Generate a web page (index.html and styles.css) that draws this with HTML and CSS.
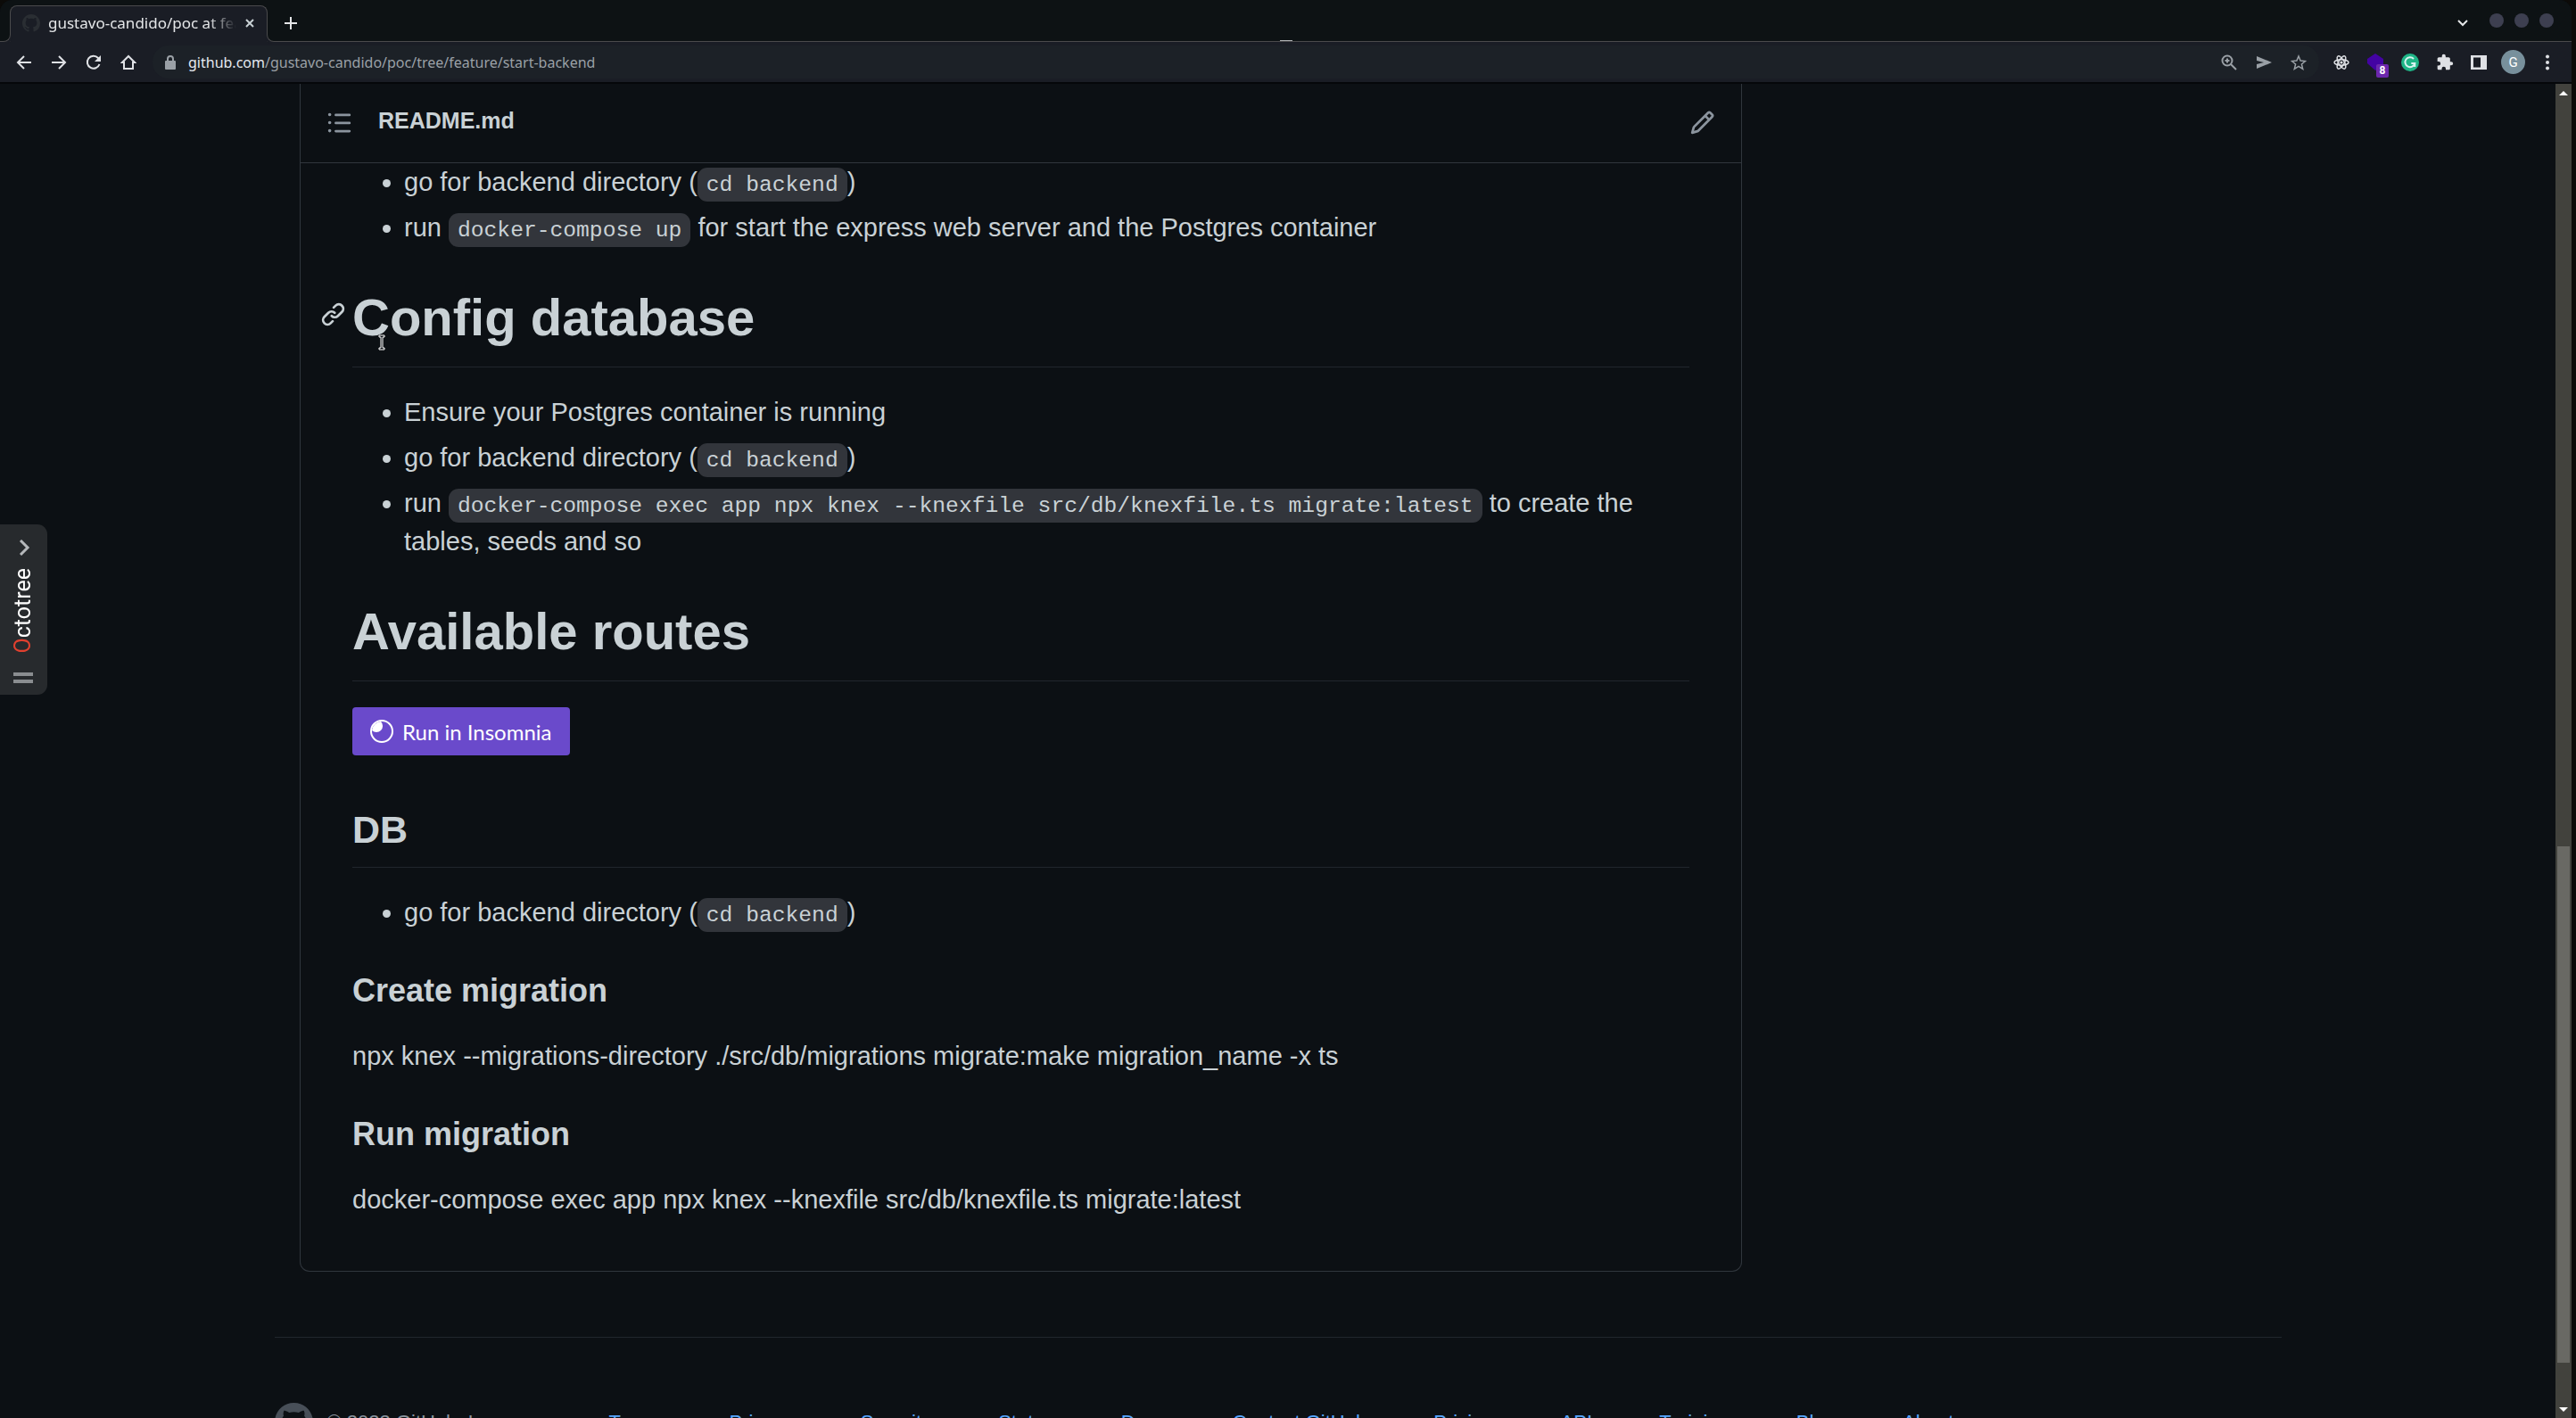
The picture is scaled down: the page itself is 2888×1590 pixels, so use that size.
FILE: index.html
```html
<!DOCTYPE html>
<html lang="en">
<head>
<meta charset="utf-8">
<title>gustavo-candido/poc at feature/start-backend</title>
<link rel="stylesheet" href="styles.css">
</head>
<body>
<div class="window">
  <header class="tabstrip">
    <div class="tab">
      <svg class="favicon" viewBox="0 0 16 16"><path fill="currentColor" d="M8 0C3.58 0 0 3.58 0 8c0 3.54 2.29 6.53 5.47 7.59.4.07.55-.17.55-.38 0-.19-.01-.82-.01-1.49-2.01.37-2.53-.49-2.69-.94-.09-.23-.48-.94-.82-1.13-.28-.15-.68-.52-.01-.53.63-.01 1.08.58 1.23.82.72 1.21 1.87.87 2.33.66.07-.52.28-.87.51-1.07-1.78-.2-3.64-.89-3.64-3.95 0-.87.31-1.59.82-2.15-.08-.2-.36-1.02.08-2.12 0 0 .67-.21 2.2.82.64-.18 1.32-.27 2-.27s1.36.09 2 .27c1.53-1.04 2.2-.82 2.2-.82.44 1.1.16 1.92.08 2.12.51.56.82 1.27.82 2.15 0 3.07-1.87 3.75-3.65 3.95.29.25.54.73.54 1.48 0 1.07-.01 1.93-.01 2.2 0 .21.15.46.55.38A8.01 8.01 0 0 0 16 8c0-4.42-3.58-8-8-8Z"/></svg>
      <span class="tab-title">gustavo-candido/poc at feature</span>
      <button class="plain" aria-label="Close tab"><svg class="i12" viewBox="0 0 12 12"><path d="M2 2l8 8M10 2l-8 8" class="line"/></svg></button>
    </div>
    <button class="plain new-tab" aria-label="New tab"><svg class="i16" viewBox="0 0 16 16"><path d="M8 1v14M1 8h14" class="line"/></svg></button>
    <div class="window-buttons">
      <button class="plain search-tabs" aria-label="Search tabs"><svg class="i12" viewBox="0 0 12 12"><path d="M1 4l5 5 5-5" class="line"/></svg></button>
      <button class="dot" aria-label="Minimize"></button>
      <button class="dot" aria-label="Maximize"></button>
      <button class="dot" aria-label="Close"></button>
    </div>
  </header>
  <nav class="toolbar">
    <div class="nav-buttons">
      <button class="plain" aria-label="Back"><svg class="i18" viewBox="0 0 18 18"><path d="M17 9H2M9 2L2 9l7 7" class="line"/></svg></button>
      <button class="plain" aria-label="Forward"><svg class="i18" viewBox="0 0 18 18"><path d="M1 9h15M9 2l7 7-7 7" class="line"/></svg></button>
      <button class="plain" aria-label="Reload"><svg class="i18" viewBox="0 0 18 18"><path d="M15.500 11A7 7 0 1 1 14 4l2 2" class="line"/><path d="M17 1v7h-7z" fill="currentColor"/></svg></button>
      <button class="plain" aria-label="Home"><svg class="i18" viewBox="0 0 18 18"><path d="M9 2L2 9h2v7h10V9h2z" class="line"/></svg></button>
    </div>
    <div class="omnibox">
      <svg class="lock" viewBox="0 0 12 16"><path d="M3 7V4a3 3 0 0 1 6 0v3" fill="none" stroke="currentColor" stroke-width="2"/><rect y="6" width="12" height="10" rx="1" fill="currentColor"/></svg>
      <div class="url"><b>github.com</b>/gustavo-candido/poc/tree/feature/start-backend</div>
      <div class="omni-actions">
        <button class="plain" aria-label="Zoom"><svg class="i18" viewBox="0 0 18 18"><circle cx="7" cy="7" r="5.500" class="line"/><path d="M11 11l6 6M4.500 7h5M7 4.500v5" class="line"/></svg></button>
        <button class="plain" aria-label="Share"><svg class="i18" viewBox="0 0 18 18"><path d="M1 2l17 7-17 7V11l8-2-8-2z" fill="currentColor"/></svg></button>
        <button class="plain" aria-label="Bookmark"><svg class="i18" viewBox="0 0 18 18"><path d="M9 2l2.100 5 5.400.500-4.100 3.500 1.300 5.300L9 13.400l-4.700 2.900 1.300-5.300L1.500 7.500 6.900 7z" class="line thin"/></svg></button>
      </div>
    </div>
    <div class="extensions">
      <button class="plain" aria-label="React"><svg class="i18" viewBox="0 0 18 18"><g class="line thin"><ellipse cx="9" cy="9" rx="8" ry="3.200"/><ellipse cx="9" cy="9" rx="8" ry="3.200" transform="rotate(60 9 9)"/><ellipse cx="9" cy="9" rx="8" ry="3.200" transform="rotate(120 9 9)"/></g><circle cx="9" cy="9" r="1.600" fill="currentColor"/></svg></button>
      <button class="plain badged" aria-label="Extension, 8 items"><svg class="i20" viewBox="0 0 20 20"><path d="M10 0l9 6v8l-9 5-9-8V6z" fill="#4303a3"/></svg><span class="badge">8</span></button>
      <button class="plain" aria-label="Grammarly"><svg class="i20" viewBox="0 0 20 20"><circle cx="10" cy="10" r="10" fill="#1fb587"/><path d="M14 6a5.500 5.500 0 1 0 1.300 5h-4M15.300 11v4" fill="none" stroke="#d8f3f0" stroke-width="2"/></svg></button>
      <button class="plain" aria-label="Extensions"><svg class="i20" viewBox="0 0 24 24"><path fill="currentColor" d="M20.500 11H19V7c0-1.100-.900-2-2-2h-4V3.500a2.500 2.500 0 0 0-5 0V5H4c-1.100 0-2 .900-2 2v3.800h1.500a2.700 2.700 0 0 1 0 5.400H2V20c0 1.100.900 2 2 2h3.800v-1.500a2.700 2.700 0 0 1 5.400 0V22H17c1.100 0 2-.900 2-2v-4h1.500a2.500 2.500 0 0 0 0-5z"/></svg></button>
      <button class="plain" aria-label="Side panel"><svg class="i18" viewBox="0 0 18 18"><path fill="currentColor" fill-rule="evenodd" d="M0 1h18v16H0zM3 3.500v11h8v-11z"/></svg></button>
      <button class="avatar" aria-label="Profile">G</button>
      <button class="plain" aria-label="Menu"><svg class="i18" viewBox="0 0 18 18"><g fill="currentColor"><circle cx="9" cy="2.500" r="2"/><circle cx="9" cy="9" r="2"/><circle cx="9" cy="15.500" r="2"/></g></svg></button>
    </div>
  </nav>
  <div class="viewport">
    <div class="page">
      <main class="layout">
        <section class="readme">
          <div class="readme-head">
            <button class="plain" aria-label="Table of contents"><svg class="i29" viewBox="0 0 16 16"><path fill="currentColor" d="M2 4a1 1 0 1 0 0-2 1 1 0 0 0 0 2Zm3.750-1.500a.75.75 0 0 0 0 1.500h8.500a.75.75 0 0 0 0-1.500h-8.500Zm0 5a.75.75 0 0 0 0 1.500h8.500a.75.75 0 0 0 0-1.500h-8.500Zm0 5a.75.75 0 0 0 0 1.500h8.500a.75.75 0 0 0 0-1.500h-8.500ZM3 8a1 1 0 1 1-2 0 1 1 0 0 1 2 0Zm-1 6a1 1 0 1 0 0-2 1 1 0 0 0 0 2Z"/></svg></button>
            <h2 class="file">README.md</h2>
            <button class="plain edit" aria-label="Edit file"><svg class="i29" viewBox="0 0 16 16"><path fill="currentColor" d="M11.013 1.427a1.750 1.750 0 0 1 2.474 0l1.086 1.086a1.750 1.750 0 0 1 0 2.474l-8.610 8.610c-.21.21-.47.364-.756.445l-3.251.930a.75.75 0 0 1-.927-.928l.929-3.250c.081-.286.235-.547.445-.758l8.610-8.610Zm.176 4.823L9.750 4.810l-6.286 6.287a.25.25 0 0 0-.064.108l-.558 1.953 1.953-.558a.25.25 0 0 0 .108-.064l6.286-6.286Zm1.238-3.763a.25.25 0 0 0-.354 0L10.811 3.750l1.439 1.440 1.263-1.263a.25.25 0 0 0 0-.354l-1.086-1.086Z"/></svg></button>
          </div>
          <article class="markdown">
            <ul>
              <li>go for backend directory (<code>cd backend</code>)</li>
              <li>run <code>docker-compose up</code> for start the express web server and the Postgres container</li>
            </ul>
            <h1><a class="anchor" href="#config-database" aria-label="Link to Config database"><svg class="i29" viewBox="0 0 16 16"><path fill="currentColor" d="m7.775 3.275 1.250-1.250a3.500 3.500 0 1 1 4.950 4.950l-2.500 2.500a3.500 3.500 0 0 1-4.950 0 .751.751 0 0 1 .018-1.042.751.751 0 0 1 1.042-.018 1.998 1.998 0 0 0 2.830 0l2.500-2.500a2.002 2.002 0 0 0-2.830-2.830l-1.250 1.250a.751.751 0 0 1-1.042-.018.751.751 0 0 1-.018-1.042Zm-4.690 9.640a1.998 1.998 0 0 0 2.830 0l1.250-1.250a.751.751 0 0 1 1.042.018.751.751 0 0 1 .018 1.042l-1.250 1.250a3.500 3.500 0 1 1-4.950-4.950l2.500-2.500a3.500 3.500 0 0 1 4.950 0 .751.751 0 0 1-.018 1.042.751.751 0 0 1-1.042.018 1.998 1.998 0 0 0-2.830 0l-2.500 2.500a1.998 1.998 0 0 0 0 2.830Z"/></svg></a>Config database</h1>
            <ul>
              <li>Ensure your Postgres container is running</li>
              <li>go for backend directory (<code>cd backend</code>)</li>
              <li>run <code>docker-compose exec app npx knex --knexfile src/db/knexfile.ts migrate:latest</code> to create the tables, seeds and so</li>
            </ul>
            <h1>Available routes</h1>
            <p class="run"><a class="insomnia" href="#run"><svg class="i26" viewBox="0 0 26 26"><circle cx="13" cy="13" r="12" fill="none" stroke="currentColor" stroke-width="2"/><path fill="currentColor" d="M12 2a6 6 0 1 1-10 10A11 11 0 0 1 12 2z"/></svg>Run in Insomnia</a></p>
            <h2>DB</h2>
            <ul>
              <li>go for backend directory (<code>cd backend</code>)</li>
            </ul>
            <h3>Create migration</h3>
            <p>npx knex --migrations-directory ./src/db/migrations migrate:make migration_name -x ts</p>
            <h3>Run migration</h3>
            <p>docker-compose exec app npx knex --knexfile src/db/knexfile.ts migrate:latest</p>
          </article>
        </section>
      </main>
      <footer class="footer">
        <svg class="mark" viewBox="0 0 16 16"><path fill="currentColor" d="M8 0C3.580 0 0 3.580 0 8c0 3.540 2.290 6.530 5.470 7.590.4.070.55-.17.55-.38 0-.19-.01-.82-.01-1.490-2.010.370-2.530-.490-2.690-.940-.09-.23-.48-.94-.82-1.130-.28-.15-.68-.52-.01-.53.63-.01 1.080.58 1.230.82.72 1.210 1.870.87 2.330.66.07-.52.28-.87.51-1.070-1.780-.2-3.640-.89-3.640-3.950 0-.87.31-1.590.82-2.150-.08-.2-.36-1.020.08-2.120 0 0 .67-.21 2.200.82.64-.18 1.320-.27 2-.27s1.360.09 2 .27c1.530-1.040 2.200-.82 2.200-.82.44 1.100.16 1.920.08 2.120.51.56.82 1.270.82 2.150 0 3.070-1.870 3.750-3.650 3.950.29.25.54.73.54 1.480 0 1.070-.01 1.930-.01 2.200 0 .21.15.46.55.38A8.010 8.010 0 0 0 16 8c0-4.420-3.580-8-8-8Z"/></svg>
        <span class="copyright">© 2023 GitHub, Inc.</span>
        <nav class="footer-links">
          <a href="#terms">Terms</a><a href="#privacy">Privacy</a><a href="#security">Security</a><a href="#status">Status</a><a href="#docs">Docs</a><a href="#contact">Contact GitHub</a><a href="#pricing">Pricing</a><a href="#api">API</a><a href="#training">Training</a><a href="#blog">Blog</a><a href="#about">About</a>
        </nav>
      </footer>
    </div>
    <div class="scrollbar">
      <svg class="arrow" viewBox="0 0 10 5"><path d="M0 5l5-5 5 5z" fill="#fff"/></svg>
      <div class="track"><div class="thumb"></div></div>
      <svg class="arrow" viewBox="0 0 10 5"><path d="M0 0l5 5 5-5z" fill="#fff"/></svg>
    </div>
    <aside class="octotree">
      <svg class="i18" viewBox="0 0 18 18"><path d="M6 1l8 8-8 8" class="line thick"/></svg>
      <span class="octo-name"><span class="octo-o">O</span>ctotree</span>
      <span class="grip"></span>
    </aside>
    <svg class="cursor" viewBox="0 0 8 18"><path d="M1 1h6v2H5v12h2v2H1v-2h2V3H1z" fill="#0d1117" stroke="#fff"/></svg>
  </div>
</div>
</body>
</html>
```
FILE: styles.css
```css
* { box-sizing: border-box; }
html, body { margin: 0; height: 100%; overflow: hidden; background: #0c0b09; }
body { font-family: "Liberation Sans", Arial, sans-serif; color: #c9d1d5; }
button { font: inherit; color: inherit; border: 0; padding: 0; background: none; }
a { color: #58a6ff; text-decoration: none; }
svg { display: block; flex: none; }

.window { height: 100%; margin-right: 5px; display: flex; flex-direction: column; border-radius: 14px 14px 0 0; background: #0c1014; overflow: hidden; }
.plain { display: grid; place-items: center; flex: none; }
.line { fill: none; stroke: currentColor; stroke-width: 2; }
.thin { stroke-width: 1.5; }
.thick { stroke-width: 3; }
.i12 { width: 12px; height: 12px; }
.i16 { width: 16px; height: 16px; }
.i18 { width: 18px; height: 18px; }
.i20 { width: 20px; height: 20px; }
.i26 { width: 26px; height: 26px; }
.i29 { width: 29px; height: 29px; }

.tabstrip { position: relative; display: flex; flex: none; height: 47px; padding: 6px 20px 0 11px; background: #0d1214; border-bottom: 1px solid #4a4a4c; font-family: "Noto Sans", sans-serif; }
.tabstrip::after { content: ""; position: absolute; left: 50%; bottom: 0; width: 14px; height: 1px; margin-left: -7px; background: #b0b3b5; }
.tab { position: relative; width: 289px; height: 41px; display: flex; align-items: center; gap: 9px; padding: 0 13px 2px; background: #1a1d25; border: 1px solid #4a4a4c; border-bottom: 0; border-radius: 8px 8px 0 0; }
.tab::before, .tab::after { content: ""; position: absolute; bottom: 0; width: 9px; height: 9px; border: 0 solid #4a4a4c; background: #0d1214; }
.tab::before { right: 100%; border-width: 0 1px 1px 0; border-bottom-right-radius: 8px; box-shadow: 2px 2px 0 #1a1d25; }
.tab::after { left: 100%; border-width: 0 0 1px 1px; border-bottom-left-radius: 8px; box-shadow: -2px 2px 0 #1a1d25; }
.favicon { width: 20px; height: 20px; color: #2a2e33; }
.tab-title { flex: 1; min-width: 0; overflow: hidden; white-space: nowrap; font-size: 17px; line-height: 24px; color: #e4e6e8; -webkit-mask-image: linear-gradient(90deg, #000 85%, transparent); mask-image: linear-gradient(90deg, #000 85%, transparent); }
.new-tab { margin-left: 18px; height: 40px; color: #e4e6e8; }
.window-buttons { margin-left: auto; height: 34px; display: flex; align-items: center; gap: 12px; }
.search-tabs { margin: 4px 12px 0 0; color: #e4e6e8; }
.dot { width: 16px; height: 16px; border-radius: 50%; background: #3d3f50; }

.toolbar { display: flex; align-items: center; flex: none; height: 47px; padding: 0 18px; background: #1a1d25; border-bottom: 2px solid #05070a; color: #dfe1e5; font-family: "Noto Sans", sans-serif; }
.nav-buttons { display: flex; gap: 21px; }
.omnibox { flex: 1; height: 37px; margin: 0 16px 0 18px; padding: 0 14px; display: flex; align-items: center; gap: 14px; border-radius: 18px; background: #1c2127; color: #9aa0a6; }
.lock { width: 12px; height: 18px; }
.url { font-size: 16px; white-space: nowrap; }
.url b { font-weight: 400; color: #e4e9f0; }
.omni-actions { margin-left: auto; display: flex; gap: 21px; }
.extensions { display: flex; align-items: center; gap: 19px; }
.badged { position: relative; }
.badge { position: absolute; left: 11px; top: 12px; width: 14px; height: 15px; border-radius: 2px; background: #6c27ad; color: #fff; font: bold 12px/15px Roboto, sans-serif; text-align: center; }
.avatar { width: 27px; height: 27px; margin: 0 -3px; border-radius: 50%; background: #78909c; color: #fff; font: 15px Roboto, sans-serif; }

.viewport { position: relative; flex: 1; min-height: 0; display: flex; }
.page { flex: 1; min-width: 0; overflow: hidden; }
.layout { max-width: 2193px; margin: 0 auto; display: grid; grid-template-columns: minmax(0, 1fr) 534px; gap: 42px; }
.readme { grid-column: 1; border: 1px solid #30363d; border-top: 0; border-radius: 0 0 11px 11px; }
.readme-head { display: flex; align-items: center; height: 89px; padding: 0 29px 2px; border-bottom: 1px solid #30363d; color: #8b949e; }
.file { margin: 0 0 0 29px; padding-bottom: 4px; font-size: 25px; line-height: 38px; color: #c9d1d5; }
.edit { margin-left: auto; }

.markdown { padding: 0 58px 29px; font-size: 29px; line-height: 43px; }
.markdown ul { margin: 0 0 29px; padding-left: 58px; }
.markdown li + li { margin-top: 8px; }
.markdown p { margin: 0 0 29px; }
.markdown code { padding: 5px 10px; border-radius: 11px; background: #32353b; font: 85% "Liberation Mono", monospace; }
.markdown h1, .markdown h2, .markdown h3 { margin: 43px 0 29px; }
.markdown h1 { position: relative; padding-bottom: 19px; border-bottom: 1px solid #21262d; font-size: 58px; line-height: 72px; }
.markdown h2 { padding-bottom: 15px; border-bottom: 1px solid #21262d; font-size: 43px; line-height: 54px; }
.markdown h3 { font-size: 36px; line-height: 46px; }
.markdown .run { padding-bottom: 13px; }
.anchor { position: absolute; left: -36px; top: 18px; color: #c9d1d5; }
.insomnia { display: inline-flex; align-items: center; gap: 10px; height: 54px; padding: 0 20px; border-radius: 4px; background: #6a4acb; color: #fff; font: 24px Lato, sans-serif; vertical-align: top; }

.footer { max-width: 2250px; margin: 73px auto 0; padding-top: 73px; display: flex; align-items: flex-start; border-top: 1px solid #21262d; font-size: 22px; line-height: 33px; color: #8b949e; }
.mark { width: 43px; height: 43px; color: #484f58; }
.copyright { width: 316px; margin: 5px 0 0 16px; }
.footer-links { width: 1508px; margin-top: 5px; display: flex; justify-content: space-between; }

.scrollbar { width: 18px; flex: none; display: flex; flex-direction: column; align-items: center; padding: 8px 2px 7px; background: #42423d; }
.arrow { width: 10px; height: 5px; }
.track { flex: 1; width: 100%; display: flex; flex-direction: column; padding: 842px 0 50px; }
.thumb { flex: 1; background: #696964; }

.octotree { position: absolute; left: 0; top: 494px; width: 53px; display: flex; flex-direction: column; align-items: center; padding: 17px 2px 13px 0; gap: 14px; border-radius: 0 11px 11px 0; background: #272a2d; color: #b5b8bb; }
.octo-name { writing-mode: vertical-rl; transform: rotate(180deg); font: 25px/30px Roboto, sans-serif; color: #fff; }
.octo-o { color: #e0402f; }
.grip { width: 22px; height: 12px; margin-top: 8px; border: solid #8a8d90; border-width: 4px 0; }
.cursor { position: absolute; left: 424px; top: 281px; width: 8px; height: 18px; }
```
